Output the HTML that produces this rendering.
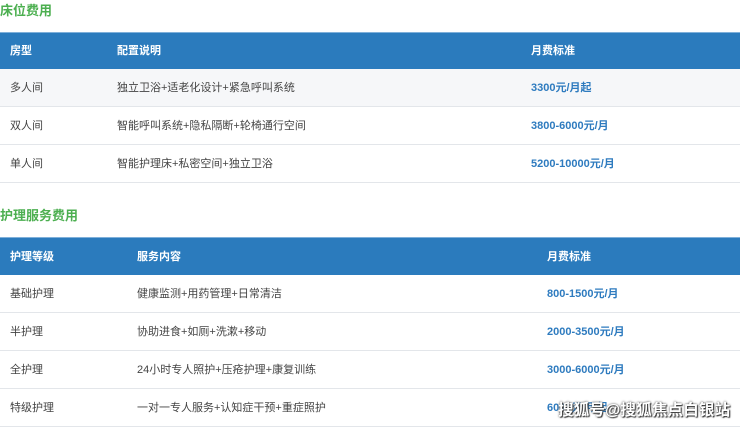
<!DOCTYPE html>
<html><head><meta charset="utf-8"><style>
*{margin:0;padding:0;box-sizing:border-box}
body{width:740px;height:429px;overflow:hidden;background:#fff;font-family:"Liberation Sans","Noto Sans CJK SC",sans-serif;font-size:11px;color:#444;position:relative}
.t{position:absolute;left:0;font-size:13px;font-weight:bold;color:#4caf50}
.h{position:absolute;left:0;width:740px;background:#2b7bbd;color:#fff;font-weight:bold;border-top:1px solid #7fb0da}
.r{position:absolute;left:0;width:740px;border-bottom:1px solid #e3e6ea}
.c{position:absolute;top:0;line-height:39px;white-space:nowrap}
.p{color:#2e7bbf;font-weight:bold}
.wm{position:absolute;left:558px;top:398px;font-size:15.5px;color:#fff;font-weight:bold;text-shadow:0 0 2px #333,1px 1px 1px #333;letter-spacing:0.2px}
</style></head><body>
<div class="t" style="top:0px">床位费用</div>
<div class="h" style="top:32px;height:37px"><span class="c" style="left:10px;line-height:37px">房型</span><span class="c" style="left:117px;line-height:37px">配置说明</span><span class="c" style="left:531px;line-height:37px">月费标准</span></div>
<div class="r" style="top:69px;height:38px;background:#f6f7f9"><span class="c" style="left:10px">多人间</span><span class="c" style="left:117px">独立卫浴+适老化设计+紧急呼叫系统</span><span class="c p" style="left:531px">3300元/月起</span></div>
<div class="r" style="top:107px;height:38px"><span class="c" style="left:10px">双人间</span><span class="c" style="left:117px">智能呼叫系统+隐私隔断+轮椅通行空间</span><span class="c p" style="left:531px">3800-6000元/月</span></div>
<div class="r" style="top:145px;height:38px"><span class="c" style="left:10px">单人间</span><span class="c" style="left:117px">智能护理床+私密空间+独立卫浴</span><span class="c p" style="left:531px">5200-10000元/月</span></div>

<div class="t" style="top:205px">护理服务费用</div>
<div class="h" style="top:237px;height:38px"><span class="c" style="left:10px">护理等级</span><span class="c" style="left:137px">服务内容</span><span class="c" style="left:547px">月费标准</span></div>
<div class="r" style="top:275px;height:38px"><span class="c" style="left:10px">基础护理</span><span class="c" style="left:137px">健康监测+用药管理+日常清洁</span><span class="c p" style="left:547px">800-1500元/月</span></div>
<div class="r" style="top:313px;height:38px"><span class="c" style="left:10px">半护理</span><span class="c" style="left:137px">协助进食+如厕+洗漱+移动</span><span class="c p" style="left:547px">2000-3500元/月</span></div>
<div class="r" style="top:351px;height:38px"><span class="c" style="left:10px">全护理</span><span class="c" style="left:137px">24小时专人照护+压疮护理+康复训练</span><span class="c p" style="left:547px">3000-6000元/月</span></div>
<div class="r" style="top:389px;height:38px"><span class="c" style="left:10px">特级护理</span><span class="c" style="left:137px">一对一专人服务+认知症干预+重症照护</span><span class="c p" style="left:547px">6000元/月起</span></div>
<div class="wm">搜狐号@搜狐焦点白银站</div>
</body></html>
